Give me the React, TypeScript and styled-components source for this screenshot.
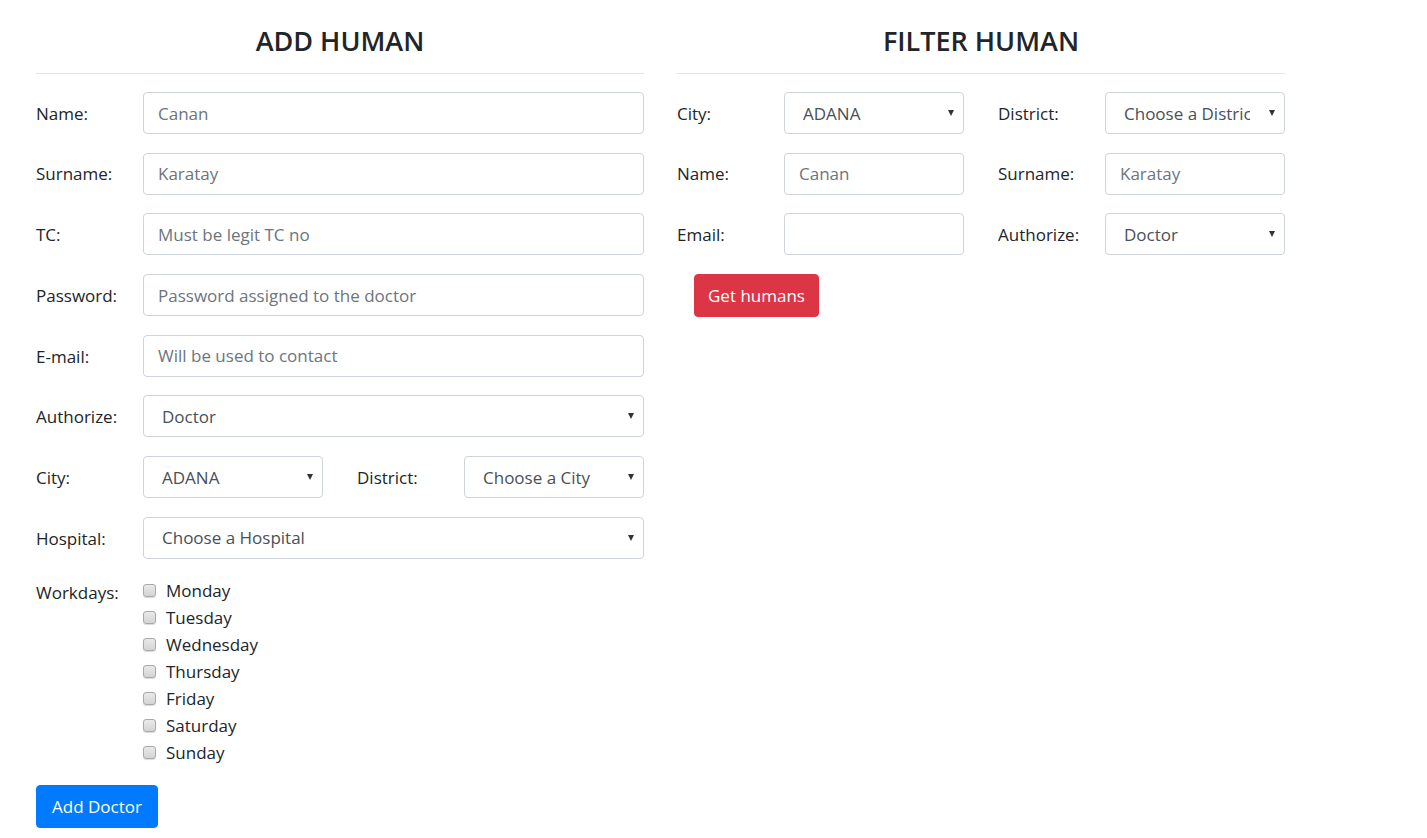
import styled, { createGlobalStyle } from "styled-components";

/* ================= GLOBAL ================= */

const GlobalStyle = createGlobalStyle`
  * { box-sizing: border-box; }
  body {
    margin: 0;
    background: #fff;
    color: #212529;
    font-family: "Open Sans", "Noto Sans", "Liberation Sans", sans-serif;
    font-size: 17px;
    line-height: 1.5;
  }
`;

/* ================= STYLES ================= */

const Page = styled.div`
  display: flex;
  align-items: flex-start;
  gap: 33px;
  padding: 22px 0 0 36px;
`;

const Column = styled.section`
  width: 608px;
  display: flex;
  flex-direction: column;
`;

const Title = styled.h3`
  margin: 0;
  font-size: 27px;
  font-weight: 600;
  line-height: 37px;
  text-align: center;
  color: #212529;
`;

const Divider = styled.hr`
  margin: 14px 0 18px;
  border: 0;
  border-top: 1px solid rgba(0, 0, 0, 0.1);
`;

const Form = styled.div`
  display: flex;
  flex-direction: column;
  gap: 18.7px;
`;

const Row = styled.div`
  display: flex;
  align-items: center;
`;

const TopRow = styled.div`
  display: flex;
  align-items: flex-start;
`;

const Label = styled.label<{ $gap?: boolean; $top?: boolean }>`
  width: 107px;
  flex-shrink: 0;
  margin-left: ${(p) => (p.$gap ? "34px" : "0")};
  padding-top: 1px;
  line-height: ${(p) => (p.$top ? "27px" : "1.5")};
  font-size: 17px;
  color: #212529;
`;

const TextInput = styled.input<{ $narrow?: boolean }>`
  height: 42px;
  width: ${(p) => (p.$narrow ? "180px" : "auto")};
  flex: ${(p) => (p.$narrow ? "0 0 180px" : "1")};
  padding: 6px 14px;
  font-family: inherit;
  font-size: 17px;
  color: #495057;
  background: #fff;
  border: 1px solid #ced4da;
  border-radius: 4px;
  outline: none;

  &::placeholder {
    color: #6c757d;
    opacity: 1;
  }
`;

const SelectWrap = styled.div<{ $narrow?: boolean }>`
  position: relative;
  flex: ${(p) => (p.$narrow ? "0 0 180px" : "1")};
  height: 42px;

  &::after {
    content: "";
    position: absolute;
    right: 10px;
    top: 18px;
    border-left: 3.5px solid transparent;
    border-right: 3.5px solid transparent;
    border-top: 6px solid #333;
    pointer-events: none;
  }
`;

const Select = styled.select`
  appearance: none;
  width: 100%;
  height: 100%;
  padding: 6px 34px 6px 18px;
  font-family: inherit;
  font-size: 17px;
  color: #495057;
  background: #fff;
  border: 1px solid #ced4da;
  border-radius: 4px;
  outline: none;
`;

const Checklist = styled.div`
  display: flex;
  flex-direction: column;
`;

const CheckItem = styled.label`
  display: flex;
  align-items: center;
  gap: 10px;
  height: 27px;
  font-size: 17px;
  color: #212529;
`;

const Checkbox = styled.input.attrs({ type: "checkbox" })`
  appearance: none;
  margin: 0 0 2px;
  width: 13px;
  height: 13px;
  border: 1px solid #a9a9a9;
  border-radius: 3px;
  background: linear-gradient(#e9e9e9, #d4d4d4);
  box-shadow: 0 1px 1px rgba(0, 0, 0, 0.15);
`;

const Button = styled.button<{ $variant: "primary" | "danger" }>`
  align-self: flex-start;
  height: 43px;
  padding: 0 15px;
  font-family: inherit;
  font-size: 17px;
  color: #fff;
  background: ${(p) => (p.$variant === "primary" ? "#007bff" : "#dc3545")};
  border: 1px solid ${(p) => (p.$variant === "primary" ? "#007bff" : "#dc3545")};
  border-radius: 4px;
`;

const FilterButton = styled(Button)`
  margin-left: 17px;
  padding: 0 13px;
`;

/* ================= DATA ================= */

const days = ["Monday", "Tuesday", "Wednesday", "Thursday", "Friday", "Saturday", "Sunday"];

/* ================= COMPONENT ================= */

export default function App() {
  return (
    <>
      <GlobalStyle />
      <Page>
        <Column>
          <Title>ADD HUMAN</Title>
          <Divider />
          <Form>
            <Row>
              <Label>Name:</Label>
              <TextInput placeholder="Canan" />
            </Row>
            <Row>
              <Label>Surname:</Label>
              <TextInput placeholder="Karatay" />
            </Row>
            <Row>
              <Label>TC:</Label>
              <TextInput placeholder="Must be legit TC no" />
            </Row>
            <Row>
              <Label>Password:</Label>
              <TextInput type="password" placeholder="Password assigned to the doctor" />
            </Row>
            <Row>
              <Label>E-mail:</Label>
              <TextInput placeholder="Will be used to contact" />
            </Row>
            <Row>
              <Label>Authorize:</Label>
              <SelectWrap>
                <Select defaultValue="Doctor">
                  <option>Doctor</option>
                </Select>
              </SelectWrap>
            </Row>
            <Row>
              <Label>City:</Label>
              <SelectWrap $narrow>
                <Select defaultValue="ADANA">
                  <option>ADANA</option>
                </Select>
              </SelectWrap>
              <Label $gap>District:</Label>
              <SelectWrap $narrow>
                <Select>
                  <option>Choose a City</option>
                </Select>
              </SelectWrap>
            </Row>
            <Row>
              <Label>Hospital:</Label>
              <SelectWrap>
                <Select>
                  <option>Choose a Hospital</option>
                </Select>
              </SelectWrap>
            </Row>
            <TopRow>
              <Label $top>Workdays:</Label>
              <Checklist>
                {days.map((d) => (
                  <CheckItem key={d}>
                    <Checkbox />
                    {d}
                  </CheckItem>
                ))}
              </Checklist>
            </TopRow>
            <Button $variant="primary">Add Doctor</Button>
          </Form>
        </Column>

        <Column>
          <Title>FILTER HUMAN</Title>
          <Divider />
          <Form>
            <Row>
              <Label>City:</Label>
              <SelectWrap $narrow>
                <Select defaultValue="ADANA">
                  <option>ADANA</option>
                </Select>
              </SelectWrap>
              <Label $gap>District:</Label>
              <SelectWrap $narrow>
                <Select>
                  <option>Choose a District</option>
                </Select>
              </SelectWrap>
            </Row>
            <Row>
              <Label>Name:</Label>
              <TextInput $narrow placeholder="Canan" />
              <Label $gap>Surname:</Label>
              <TextInput $narrow placeholder="Karatay" />
            </Row>
            <Row>
              <Label>Email:</Label>
              <TextInput $narrow />
              <Label $gap>Authorize:</Label>
              <SelectWrap $narrow>
                <Select defaultValue="Doctor">
                  <option>Doctor</option>
                </Select>
              </SelectWrap>
            </Row>
            <FilterButton $variant="danger">Get humans</FilterButton>
          </Form>
        </Column>
      </Page>
    </>
  );
}
